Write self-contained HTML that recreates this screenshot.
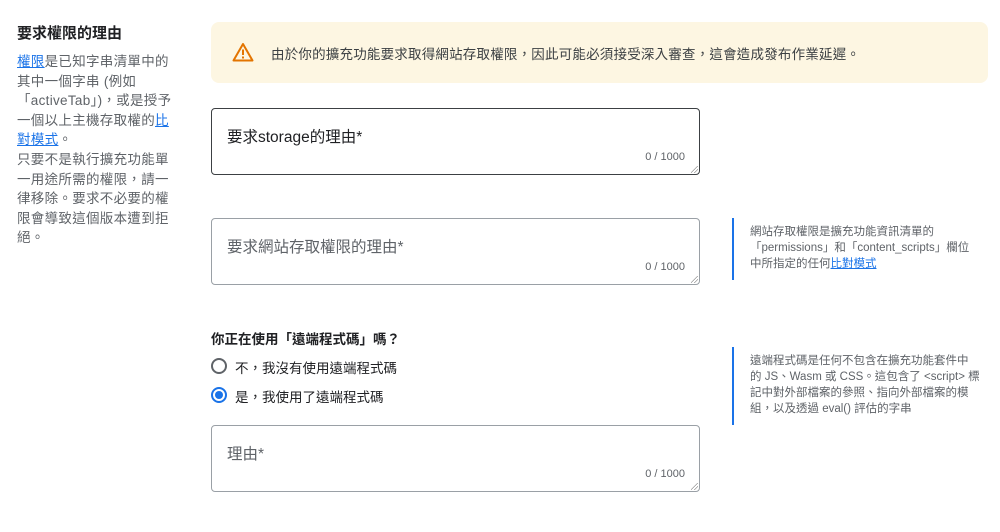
<!DOCTYPE html>
<html><head><meta charset="utf-8"><style>
*{box-sizing:border-box;margin:0;padding:0}
body{width:1000px;height:532px;background:#fff;font-family:"Liberation Sans","Noto Sans CJK TC",sans-serif;color:#3c4043;position:relative;overflow:hidden}
a{color:#1a73e8;text-decoration:underline}
.abs{position:absolute}
h2{position:absolute;left:17px;top:22px;font-size:15px;font-weight:bold;color:#202124}
.left{left:17px;top:52px;width:200px;font-size:13.5px;line-height:19.6px;color:#5f6368;letter-spacing:0.3px;white-space:nowrap}
.warn{left:211px;top:22px;width:777px;height:61px;background:#fdf6e2;border-radius:8px}
.warn span{position:absolute;left:60px;top:21px;font-size:13.5px;letter-spacing:0.2px;color:#3c4043}
.ta{position:absolute;left:211px;width:489px;height:67px;border:1px solid #9aa0a6;border-radius:4px}
.ta .lb{position:absolute;left:15px;top:16px;font-size:15.5px;color:#5f6368}
.ta .ct{position:absolute;right:14px;top:42px;font-size:11px;color:#5f6368}
.ta .rs{position:absolute;right:1px;bottom:1px;width:7px;height:7px;background:linear-gradient(135deg,transparent 45%,#999 45%,#999 52%,transparent 52%,transparent 70%,#999 70%,#999 77%,transparent 77%)}
.note{position:absolute;left:732px;border-left:2px solid #1a73e8;padding-left:16px;font-size:11.5px;line-height:16px;color:#5f6368;width:270px;white-space:nowrap}
.q{left:211px;top:328px;font-size:13.5px;font-weight:bold;color:#202124}
.r{position:absolute;left:211px;font-size:13.5px;color:#202124}
.r i{position:absolute;left:0;top:0;width:16px;height:16px;border:2px solid #5f6368;border-radius:50%}
.r i.on{border-color:#1a73e8}
.r i.on:after{content:"";position:absolute;left:2px;top:2px;width:8px;height:8px;border-radius:50%;background:#1a73e8}
.r span{position:absolute;left:24px;top:-1px;white-space:nowrap}
</style></head><body>
<h2>要求權限的理由</h2>
<div class="abs left"><a>權限</a>是已知字串清單中的<br>其中一個字串 (例如<br>「activeTab」)，或是授予<br>一個以上主機存取權的<a>比</a><br><a>對模式</a>。<br>只要不是執行擴充功能單<br>一用途所需的權限，請一<br>律移除。要求不必要的權<br>限會導致這個版本遭到拒<br>絕。</div>
<div class="abs warn">
<svg class="abs" style="left:21px;top:20px" width="22" height="20" viewBox="0 0 22 20"><path d="M11 2 L20.5 18.5 H1.5 Z" fill="none" stroke="#e37400" stroke-width="2" stroke-linejoin="round"/><rect x="10" y="7.5" width="2" height="5.5" fill="#e37400"/><rect x="10" y="14.5" width="2" height="2" fill="#e37400"/></svg>
<span>由於你的擴充功能要求取得網站存取權限，因此可能必須接受深入審查，這會造成發布作業延遲。</span></div>
<div class="ta" style="top:108px;border-color:#3c4043"><div class="lb" style="color:#202124">要求storage的理由*</div><div class="ct">0 / 1000</div><div class="rs"></div></div>
<div class="ta" style="top:218px"><div class="lb">要求網站存取權限的理由*</div><div class="ct">0 / 1000</div><div class="rs"></div></div>
<div class="note" style="top:218px;height:62px;padding-top:6px">網站存取權限是擴充功能資訊清單的<br>「permissions」和「content_scripts」欄位<br>中所指定的任何<a>比對模式</a></div>
<div class="abs q">你正在使用「遠端程式碼」嗎？</div>
<div class="r" style="top:358px"><i></i><span>不，我沒有使用遠端程式碼</span></div>
<div class="r" style="top:387px"><i class="on"></i><span>是，我使用了遠端程式碼</span></div>
<div class="note" style="top:347px;height:78px;padding-top:6px">遠端程式碼是任何不包含在擴充功能套件中<br>的 JS、Wasm 或 CSS。這包含了 &lt;script&gt; 標<br>記中對外部檔案的參照、指向外部檔案的模<br>組，以及透過 eval() 評估的字串</div>
<div class="ta" style="top:425px"><div class="lb">理由*</div><div class="ct">0 / 1000</div><div class="rs"></div></div>
</body></html>
